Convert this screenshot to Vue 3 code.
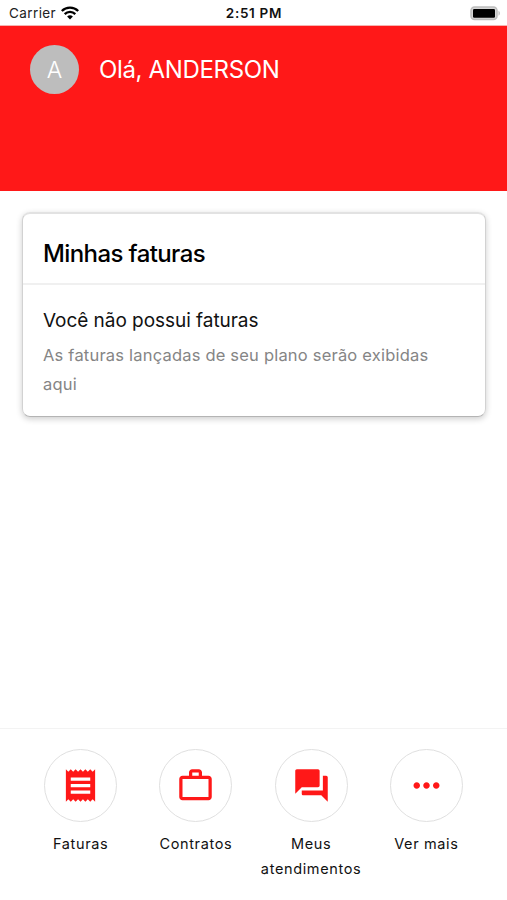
<template>
    <div class="screen">
        <div class="status-bar">
            <div class="carrier">
                <span>Carrier</span>
                <svg class="wifi" viewBox="0 0 18 14">
                    <path d="M.8 5a11.6 11.6 0 0 1 16.4 0" />
                    <path d="M3.7 8.1a7.5 7.5 0 0 1 10.6 0" />
                    <path class="dot" d="M9 13.6l-2.9-3a4.2 4.2 0 0 1 5.8 0z" />
                </svg>
            </div>
            <div class="time">2:51 PM</div>
            <svg class="battery" viewBox="0 0 31 15">
                <rect x="1" y="1" width="26" height="12.6" rx="3.5" fill="#d6d6d6" stroke="#bdbdbd" stroke-width="1.5" />
                <rect x="3" y="3" width="22" height="8.8" rx="1.2" fill="#000" />
                <path d="M28.5 4.8c1.8.8 1.8 4.2 0 5z" fill="#bdbdbd" />
            </svg>
        </div>

        <header class="header">
            <div class="avatar">A</div>
            <h1 class="greeting">Olá, ANDERSON</h1>
        </header>

        <main class="content">
            <section class="card">
                <h2 class="card-title">Minhas faturas</h2>
                <div class="card-body">
                    <h3>Você não possui faturas</h3>
                    <p>As faturas lançadas de seu plano serão exibidas aqui</p>
                </div>
            </section>
        </main>

        <nav class="menu">
            <div v-for="item in items" :key="item.label" class="menu-item">
                <div class="menu-icon">
                    <svg viewBox="0 0 24 24">
                        <path :d="item.icon" />
                    </svg>
                </div>
                <span class="menu-label">{{ item.label }}</span>
            </div>
        </nav>
    </div>
</template>

<script setup>
const items = [
    {
        label: "Faturas",
        icon: "M18 17H6v-2h12v2zm0-4H6v-2h12v2zm0-4H6V7h12v2zM3 22l1.5-1.5L6 22l1.5-1.5L9 22l1.5-1.5L12 22l1.5-1.5L15 22l1.5-1.5L18 22l1.5-1.5L21 22V2l-1.5 1.5L18 2l-1.5 1.5L15 2l-1.5 1.5L12 2l-1.5 1.5L9 2 7.5 3.5 6 2 4.5 3.5 3 2v20z"
    },
    {
        label: "Contratos",
        icon: "M14 6V4h-4v2h4zM4 8v11h16V8H4zm16-2c1.11 0 2 .89 2 2v11c0 1.11-.89 2-2 2H4c-1.11 0-2-.89-2-2V8c0-1.11.89-2 2-2h4V4c0-1.11.89-2 2-2h4c1.11 0 2 .89 2 2v2h4z"
    },
    {
        label: "Meus atendimentos",
        icon: "M21 6h-2v9H6v2c0 .55.45 1 1 1h11l4 4V7c0-.55-.45-1-1-1zm-4 6V3c0-.55-.45-1-1-1H3c-.55 0-1 .45-1 1v14l4-4h10c.55 0 1-.45 1-1z"
    },
    {
        label: "Ver mais",
        icon: "M6 10c-1.1 0-2 .9-2 2s.9 2 2 2 2-.9 2-2-.9-2-2-2zm12 0c-1.1 0-2 .9-2 2s.9 2 2 2 2-.9 2-2-.9-2-2-2zm-6 0c-1.1 0-2 .9-2 2s.9 2 2 2 2-.9 2-2-.9-2-2-2z"
    }
];
</script>

<style>
body {
    margin: 0;
    background: #fff;
}
</style>

<style scoped>
.screen {
    display: flex;
    flex-direction: column;
    height: 900px;
    overflow: hidden;
    font-family: Inter, "Liberation Sans", sans-serif;
    color: #111;
}

h1,
h2,
h3,
p {
    margin: 0;
    font-weight: 400;
}

.status-bar {
    display: grid;
    grid-template-columns: 1fr auto 1fr;
    align-items: center;
    box-sizing: border-box;
    height: 26px;
    padding: 1px 6px 0 9px;
    border-bottom: 1px solid #f6b3b0;
}

.carrier {
    display: flex;
    align-items: center;
    gap: 5px;
    font-size: 13.5px;
    letter-spacing: 0.4px;
    color: #222;
}

.wifi {
    width: 18px;
    height: 14px;
    fill: none;
    stroke: #000;
    stroke-width: 2.3;
}

.wifi .dot {
    fill: #000;
    stroke: none;
}

.time {
    margin-right: 2px;
    font-size: 13.5px;
    font-weight: 600;
    letter-spacing: 0.7px;
}

.battery {
    justify-self: end;
    width: 31px;
    height: 15px;
}

.header {
    display: flex;
    align-items: flex-start;
    gap: 20px;
    box-sizing: border-box;
    height: 165px;
    padding: 19px 30px 0;
    background: #ff1818;
    color: #fff;
}

.avatar {
    width: 49px;
    height: 49px;
    border-radius: 50%;
    background: #bdbdbd;
    font-size: 23px;
    font-weight: 300;
    line-height: 50px;
    text-align: center;
}

.greeting {
    font-size: 24px;
    line-height: 49px;
    letter-spacing: -0.35px;
}

.content {
    flex: 1;
    padding: 21px 21px 0 22px;
}

.card {
    box-sizing: border-box;
    height: 205px;
    border: 1px solid #d2d2d2;
    border-top: 2px solid #e2e2e2;
    border-bottom-color: #b4b4b4;
    border-radius: 8px;
    box-shadow: 0 2px 6px rgba(0, 0, 0, 0.2);
}

.card-title {
    box-sizing: border-box;
    height: 71px;
    padding: 0 20px;
    border-bottom: 2px solid #f0f0f0;
    font-size: 24px;
    font-weight: 500;
    line-height: 79px;
    letter-spacing: -0.6px;
    color: #000;
}

.card-body {
    padding: 21px 20px 0;
}

.card-body h3 {
    font-size: 19px;
    line-height: 30px;
    letter-spacing: -0.04px;
}

.card-body p {
    margin-top: 5px;
    font-size: 16.5px;
    line-height: 29px;
    letter-spacing: 0.2px;
    color: #858585;
}

.menu {
    display: grid;
    grid-template-columns: repeat(4, 1fr);
    box-sizing: border-box;
    height: 172px;
    padding: 20px 23px 0;
    border-top: 1px solid #f3f3f3;
}

.menu-item {
    display: flex;
    flex-direction: column;
    align-items: center;
}

.menu-icon {
    display: flex;
    align-items: center;
    justify-content: center;
    box-sizing: border-box;
    width: 73px;
    height: 73px;
    padding-bottom: 1px;
    border: 1px solid #e0e0e0;
    border-radius: 50%;
}

.menu-icon svg {
    width: 39px;
    height: 39px;
    fill: #ff1818;
}

.menu-label {
    margin-top: 10px;
    font-size: 14.5px;
    line-height: 24.5px;
    letter-spacing: 0.64px;
    text-align: center;
}
</style>
